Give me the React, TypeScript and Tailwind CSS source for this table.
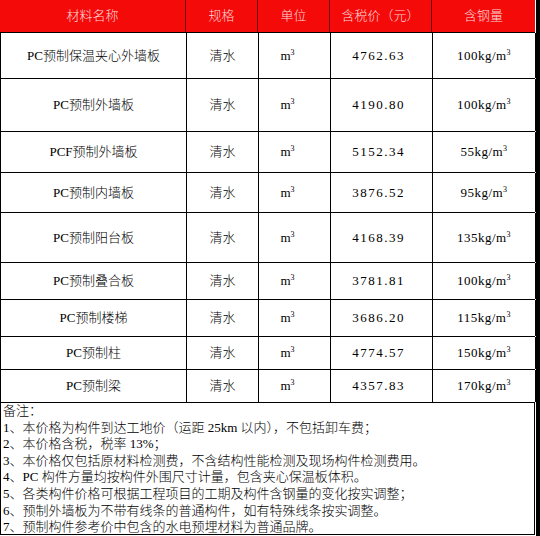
const cols = "grid grid-cols-[186px_72px_72px_102px_103px]";

const rows = [
  { name: "PC预制保温夹心外墙板", price: "4762.63", steel: "100kg/m", h: "h-[46px]" },
  { name: "PC预制外墙板", price: "4190.80", steel: "100kg/m", h: "h-[53px]" },
  { name: "PCF预制外墙板", price: "5152.34", steel: "55kg/m", h: "h-[41px]" },
  { name: "PC预制内墙板", price: "3876.52", steel: "95kg/m", h: "h-[40px]" },
  { name: "PC预制阳台板", price: "4168.39", steel: "135kg/m", h: "h-[50px]" },
  { name: "PC预制叠合板", price: "3781.81", steel: "100kg/m", h: "h-[37px]" },
  { name: "PC预制楼梯", price: "3686.20", steel: "115kg/m", h: "h-[37px]" },
  { name: "PC预制柱", price: "4774.57", steel: "150kg/m", h: "h-[33px]" },
  { name: "PC预制梁", price: "4357.83", steel: "170kg/m", h: "h-[33px]" },
];

const notes = [
  "备注：",
  "1、本价格为构件到达工地价（运距 25km 以内），不包括卸车费；",
  "2、本价格含税，税率 13%；",
  "3、本价格仅包括原材料检测费，不含结构性能检测及现场构件检测费用。",
  "4、PC 构件方量均按构件外围尺寸计量，包含夹心保温板体积。",
  "5、各类构件价格可根据工程项目的工期及构件含钢量的变化按实调整；",
  "6、预制外墙板为不带有线条的普通构件，如有特殊线条按实调整。",
  "7、预制构件参考价中包含的水电预埋材料为普通品牌。",
];

const headers = ["材料名称", "规格", "单位", "含税价（元）", "含钢量"];

// small raised "3" after m, as in m³
const Cube = () => <span className="relative -top-[3px] text-[8px] leading-none">3</span>;

const App = () => {
  return (
    <div className="flex h-[536px] w-[540px] overflow-hidden bg-white font-light text-black [font-family:'Liberation_Serif','Noto_Sans_CJK_SC',serif]">
      <div className="w-[535px]">
        {/* Header */}
        <div className={`${cols} h-[33px] border-b border-black bg-[#f50a0a]`}>
          {headers.map((h, i) => (
            <div
              key={h}
              className={`flex items-center justify-center pb-px text-[13px] text-[#ffd9d9] ${
                i < 4 ? "border-r border-[#6a0000]" : ""
              }`}
            >
              {h}
            </div>
          ))}
        </div>

        {/* Rows */}
        {rows.map((r) => (
          <div key={r.name} className={`${cols} ${r.h} border-b border-l border-black text-[13px]`}>
            <div className="flex items-center justify-center border-r border-black">{r.name}</div>
            <div className="flex items-center justify-center border-r border-black">清水</div>
            <div className="flex items-center justify-center border-r border-black pr-[14px]">
              m<Cube />
            </div>
            <div className="flex items-center justify-center border-r border-black pr-[6px] tracking-[1.5px]">
              {r.price}
            </div>
            <div className="flex items-center justify-center border-r border-black tracking-[0.5px]">
              {r.steel}
              <Cube />
            </div>
          </div>
        ))}

        {/* Notes */}
        <div className="h-[132px] border-b border-l border-r border-black pl-[2px] text-[13px] leading-[16.6px]">
          {notes.map((n) => (
            <div key={n} className="whitespace-nowrap">
              {n}
            </div>
          ))}
        </div>
      </div>
      <div className="w-px" />
      <div className="w-[4px] bg-black" />
    </div>
  );
};

export default App;
